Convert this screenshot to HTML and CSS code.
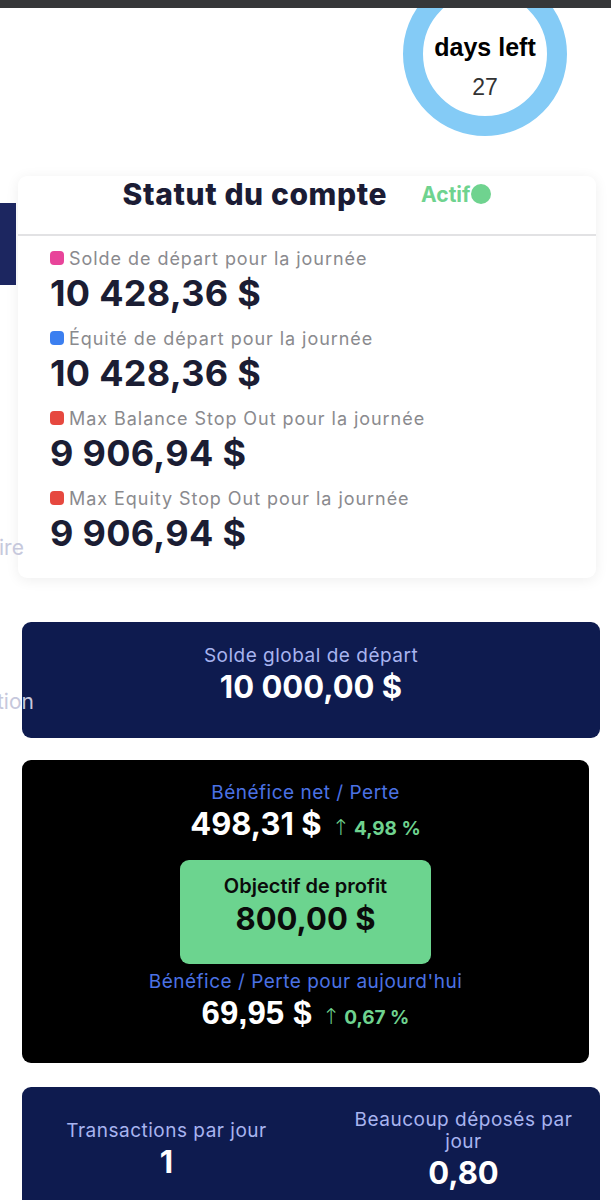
FILE: index.html
```html
<!DOCTYPE html>
<html lang="fr">
<head>
  <meta charset="UTF-8" />
  <meta name="viewport" content="width=device-width, initial-scale=1.0"/>
  <title>Statut du compte</title>
  <link rel="stylesheet" href="styles.css">
</head>
<body>
  <div class="topbar"></div>

  <div class="sidebar">
    <div class="side-block"></div>
    <div class="side-text side-ire">ire</div>
    <div class="side-text side-tion">tion</div>
  </div>

  <div class="days">
    <div class="ring">
      <div class="days-title">days left</div>
      <div class="days-count">27</div>
    </div>
  </div>

  <div class="status">
    <div class="status-head">
      <h2>Statut du compte</h2>
      <span class="active">Actif<span class="dot"></span></span>
    </div>
    <div class="status-body">
      <div class="stat">
        <div class="stat-label"><span class="sq pink"></span>Solde de départ pour la journée</div>
        <div class="stat-value">10 428,36 $</div>
      </div>
      <div class="stat">
        <div class="stat-label"><span class="sq blue"></span>Équité de départ pour la journée</div>
        <div class="stat-value">10 428,36 $</div>
      </div>
      <div class="stat">
        <div class="stat-label"><span class="sq red"></span>Max Balance Stop Out pour la journée</div>
        <div class="stat-value">9 906,94 $</div>
      </div>
      <div class="stat">
        <div class="stat-label"><span class="sq red"></span>Max Equity Stop Out pour la journée</div>
        <div class="stat-value">9 906,94 $</div>
      </div>
    </div>
  </div>

  <div class="card navy global">
    <div class="card-label">Solde global de départ</div>
    <div class="card-value">10 000,00 $</div>
  </div>

  <div class="card profit">
    <div class="profit-label">Bénéfice net / Perte</div>
    <div class="profit-line">
      <span class="profit-value">498,31 $</span>
      <span class="arrow">↑</span><span class="pct">4,98 %</span>
    </div>
    <div class="target">
      <div class="target-label">Objectif de profit</div>
      <div class="target-value">800,00 $</div>
    </div>
    <div class="profit-label">Bénéfice / Perte pour aujourd'hui</div>
    <div class="profit-line today">
      <span class="profit-value">69,95 $</span>
      <span class="arrow">↑</span><span class="pct">0,67 %</span>
    </div>
  </div>

  <div class="card navy daily">
    <div class="daily-col">
      <div class="card-label">Transactions par jour</div>
      <div class="card-value">1</div>
    </div>
    <div class="daily-col">
      <div class="card-label">Beaucoup déposés par jour</div>
      <div class="card-value">0,80</div>
    </div>
  </div>
</body>
</html>
```

FILE: styles.css
```css
body {
  margin: 0;
  font-family: Inter, "Open Sans", sans-serif;
  background: white;
  overflow: hidden;
}

.topbar {
  height: 8px;
  background: #363739;
  position: relative;
  z-index: 2;
}

.sidebar {
  position: absolute;
  left: 0;
  top: 0;
  width: 40px;
  height: 1200px;
  z-index: 1;
}

.side-block {
  position: absolute;
  top: 203px;
  width: 16px;
  height: 82px;
  background: #1c2660;
}

.side-text {
  position: absolute;
  font-size: 21px;
  color: #c6c8dc;
}

.side-ire {
  top: 535px;
  left: -1px;
}

.side-tion {
  top: 689px;
  left: -3px;
}

.days {
  height: 168px;
  overflow: hidden;
}

.ring {
  width: 124px;
  height: 124px;
  margin: -36px 0 0 403px;
  border: 20px solid #84cbf6;
  border-radius: 50%;
  text-align: center;
  font-family: "Liberation Sans", Arial, sans-serif;
}

.days-title {
  padding-top: 41px;
  font-size: 25px;
  font-weight: bold;
  color: #000;
}

.days-count {
  margin-top: 12px;
  font-size: 23px;
  color: #333;
}

.status {
  position: relative;
  z-index: 0;
  margin-left: 18px;
  width: 578px;
  height: 402px;
  background: white;
  border-radius: 9px;
  box-shadow: 0 2px 14px rgba(0, 0, 0, 0.07);
}

.status-head {
  display: flex;
  justify-content: center;
  align-items: center;
  gap: 34px;
  padding-bottom: 22px;
  box-sizing: border-box;
  height: 60px;
  border-bottom: 2px solid #e2e2e4;
}

.status-head h2 {
  margin: 0;
  font-size: 30px;
  font-weight: 800;
  letter-spacing: 0.6px;
  color: #1b1c35;
}

.active {
  display: flex;
  align-items: center;
  font-size: 21px;
  font-weight: 700;
  color: #6fd38f;
}

.dot {
  width: 20px;
  height: 20px;
  border-radius: 50%;
  background: #6fd38f;
  margin-left: 1px;
}

.status-body {
  padding: 9px 0 0 32px;
}

.stat {
  height: 80px;
}

.stat-label {
  display: flex;
  align-items: center;
  gap: 5px;
  font-size: 18px;
  letter-spacing: 0.95px;
  color: #8a8a8e;
  height: 26px;
}

.sq {
  width: 14px;
  height: 14px;
  border-radius: 4px;
}

.pink { background: #e8449a; }
.blue { background: #3b7ff0; }
.red { background: #e6483f; }

.stat-value {
  font-size: 36px;
  font-weight: 700;
  letter-spacing: 0.3px;
  color: #1b1d33;
  line-height: 44px;
}

.card {
  margin: 0 0 0 22px;
  border-radius: 9px;
  text-align: center;
}

.navy {
  background: #0e1b4f;
}

.global {
  margin-top: 44px;
  width: 578px;
  height: 116px;
  padding-top: 22px;
  box-sizing: border-box;
}

.card-label {
  font-size: 19px;
  letter-spacing: 0.5px;
  color: #a8b4ef;
}

.card-value {
  font-size: 31px;
  font-weight: 700;
  color: white;
  line-height: 40px;
}

.profit {
  margin-top: 22px;
  width: 567px;
  height: 303px;
  background: #000;
  padding-top: 21px;
  box-sizing: border-box;
}

.profit-label {
  font-size: 19px;
  letter-spacing: 0.5px;
  color: #4b72e4;
}

.profit-line {
  display: flex;
  justify-content: center;
  align-items: baseline;
  gap: 4px;
  margin-bottom: 11px;
  line-height: 40px;
}

.profit-value {
  font-size: 31px;
  font-weight: 700;
  color: white;
  margin-right: 6px;
}

.arrow {
  font-size: 22px;
  color: #6fd38f;
  font-family: "DejaVu Sans", sans-serif;
  font-weight: 300;
}

.pct {
  font-size: 19px;
  font-weight: 700;
  color: #6fd38f;
}

.today .profit-value {
  font-family: "Liberation Sans", Arial, sans-serif;
  font-size: 33px;
}

.target {
  width: 251px;
  height: 104px;
  margin: 0 auto 6px;
  background: #6cd48f;
  border-radius: 9px;
  box-sizing: border-box;
  padding-top: 14px;
}

.target-label {
  font-size: 20px;
  font-weight: 600;
  color: #0b0b0b;
}

.target-value {
  font-size: 31px;
  font-weight: 700;
  color: #0b0b0b;
  line-height: 42px;
}

.daily {
  margin-top: 24px;
  width: 578px;
  height: 140px;
  display: grid;
  grid-template-columns: 1fr 1fr;
  align-items: center;
  padding-bottom: 12px;
  box-sizing: border-box;
}

.daily-col {
  padding: 0 14px;
}

.daily .card-label {
  line-height: 22px;
}

.daily-col + .daily-col {
  padding-left: 30px;
}
```
